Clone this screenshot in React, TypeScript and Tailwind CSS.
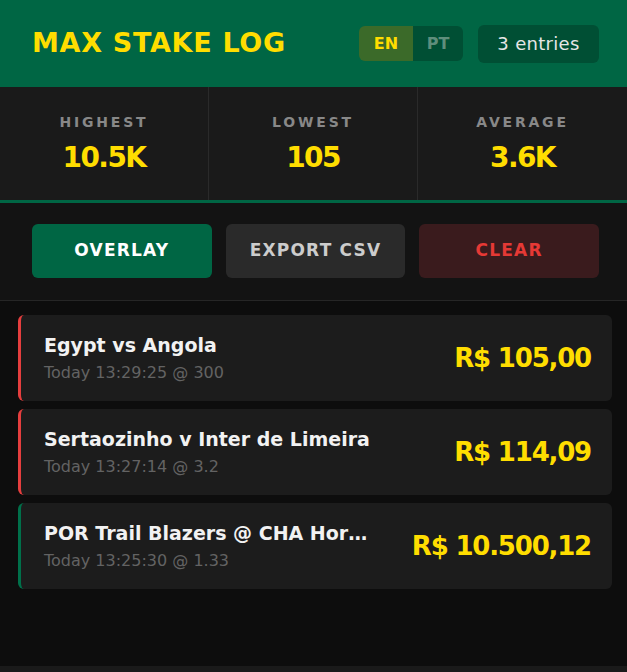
import React from "react";

const entries = [
  { title: "Egypt vs Angola", sub: "Today 13:29:25 @ 300", amount: "R$ 105,00", color: "border-[#e53e3e]" },
  { title: "Sertaozinho v Inter de Limeira", sub: "Today 13:27:14 @ 3.2", amount: "R$ 114,09", color: "border-[#e53e3e]" },
  { title: "POR Trail Blazers @ CHA Hornets", sub: "Today 13:25:30 @ 1.33", amount: "R$ 10.500,12", color: "border-[#00704a]" },
];

export default function App() {
  return (
    <div
      className="w-[627px] h-[672px] bg-[#0d0d0d] flex flex-col overflow-hidden"
      style={{ fontFamily: "'DejaVu Sans', 'Noto Sans', sans-serif" }}
    >
      <header className="h-[87px] bg-[#006644] flex items-center pl-8 pr-7 shrink-0">
        <h1 className="text-[27px] font-bold text-[#ffdd00] tracking-[0.7px] flex-1">MAX STAKE LOG</h1>
        <div className="flex h-[35px] rounded-md overflow-hidden">
          <div className="w-[54px] bg-[#3b6a29] text-[#ffdd00] font-bold text-[16px] flex items-center justify-center">EN</div>
          <div className="w-[50px] bg-[#004f34] text-[#5f8e7c] font-bold text-[16px] flex items-center justify-center">PT</div>
        </div>
        <div className="ml-[15px] h-[38px] w-[121px] rounded-md bg-[#004f34] text-[#e6e6e6] text-[18px] tracking-[0.3px] flex items-center justify-center">
          3 entries
        </div>
      </header>

      <div className="grid grid-cols-3 bg-[#1a1a1a] h-[116px] border-b-[3px] border-[#006644] shrink-0">
        {[
          ["HIGHEST", "10.5K"],
          ["LOWEST", "105"],
          ["AVERAGE", "3.6K"],
        ].map(([l, v], i) => (
          <div key={l} className={`flex flex-col items-center justify-center ${i < 2 ? "border-r border-[#2a2a2a]" : ""}`}>
            <div className="text-[14px] font-bold tracking-[2.8px] text-[#888888] leading-none">{l}</div>
            <div className="mt-[15px] text-[28px] font-bold text-[#ffdd00] leading-none tracking-[-1.6px]">{v}</div>
          </div>
        ))}
      </div>

      <div className="bg-[#131313] pt-[21px] pb-[22px] pl-8 pr-7 flex gap-[14px] border-b border-[#262626] shrink-0">
        <button className="flex-1 h-[54px] rounded-md bg-[#006644] text-white font-bold text-[17px] tracking-[1.2px]">OVERLAY</button>
        <button className="flex-1 h-[54px] rounded-md bg-[#2a2a2a] text-[#cccccc] font-bold text-[17px] tracking-[1.2px]">EXPORT CSV</button>
        <button className="flex-1 h-[54px] rounded-md bg-[#3a1b1d] text-[#e53935] font-bold text-[17px] tracking-[1.2px]">CLEAR</button>
      </div>

      <div className="flex-1 pt-[14px] pl-[18px] pr-[15px] flex flex-col gap-[8px]">
        {entries.map((e) => (
          <div key={e.sub} className={`h-[86px] rounded-md bg-[#1c1c1c] border-l-[3px] ${e.color} flex items-center pl-[23px] pr-[21px]`}>
            <div className="flex-1 min-w-0 pr-4">
              <div className="text-[19px] font-semibold text-[#f2f2f2] truncate max-w-[328px] leading-[26px]">{e.title}</div>
              <div className="text-[16px] text-[#636363] mt-[4px] leading-[22px]">{e.sub}</div>
            </div>
            <div className="text-[26px] font-bold text-[#ffdd00] tracking-[-1.2px] whitespace-nowrap">{e.amount}</div>
          </div>
        ))}
      </div>
      <div className="h-[6px] bg-[#1a1a1a] shrink-0" />
    </div>
  );
}
